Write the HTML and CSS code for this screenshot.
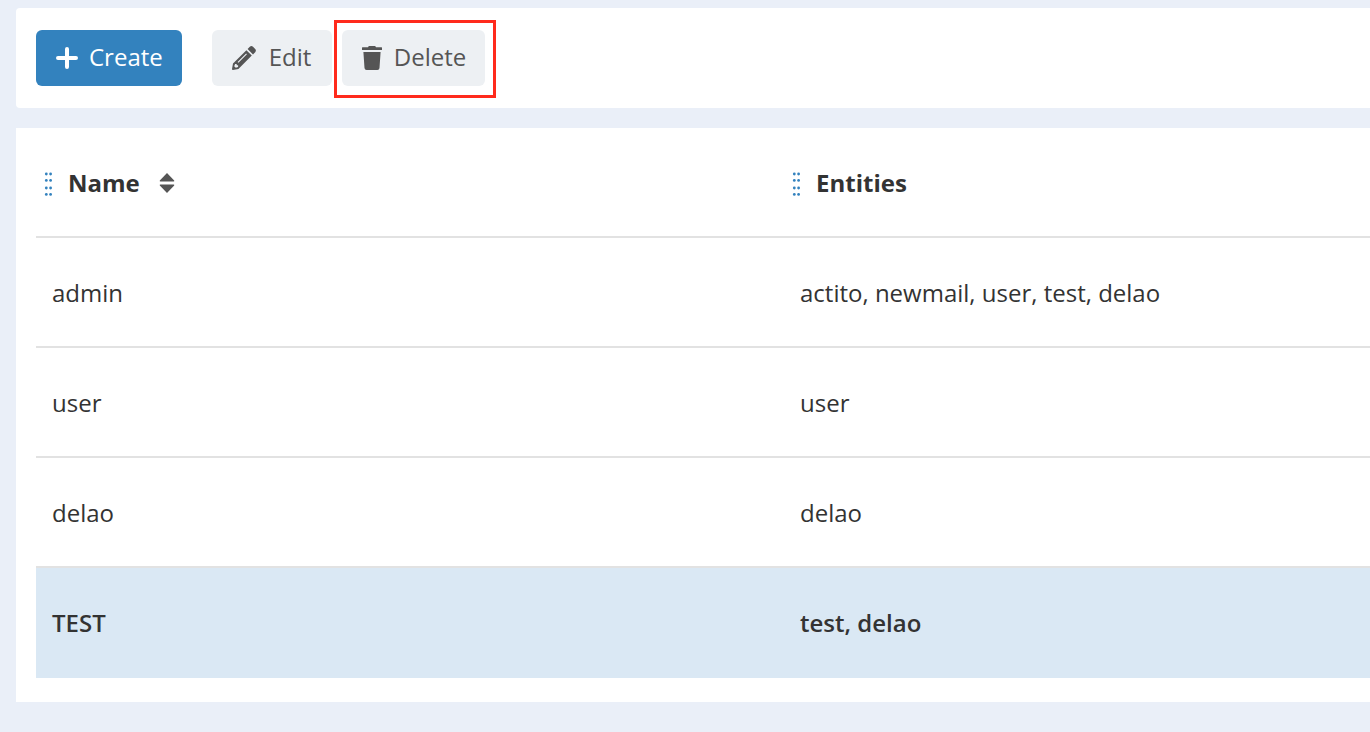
FILE: index.html
```html
<!DOCTYPE html>
<html lang="en">
<head>
<meta charset="utf-8">
<title>Profiles</title>
<link rel="stylesheet" href="styles.css">
</head>
<body>
<main class="page">
  <div class="toolbar">
    <button type="button" class="btn btn-primary">
      <svg class="icon" width="21" height="24" viewBox="0 0 21 24" overflow="visible" aria-hidden="true"><path d="M2 12H20M11 3V21" stroke="currentColor" stroke-width="4" stroke-linecap="round"/></svg>
      Create
    </button>
    <div class="group">
      <button type="button" class="btn">
        <svg class="icon" width="25" height="24" viewBox="0 0 25 24" aria-hidden="true"><path fill="currentColor" fill-rule="evenodd" d="M14.4 4.2 19.8 9.6 6.4 23 .9 24Q0 24 0 23.1L1 17.6ZM14.1 7.4 5.6 15.9 6.4 16.7 14.9 8.2ZM3.1 17.9 2.2 20.2 3.8 21.8 6.1 20.9V19.3H4.7V17.9ZM15.6 3 17.8.8Q19.4-.6 21 .8L23.2 3Q24.6 4.6 23.2 6.2L21 8.4Z"/></svg>
        Edit
      </button>
      <div class="marked">
        <button type="button" class="btn">
          <svg class="icon" width="20" height="24" viewBox="0 0 20 24" aria-hidden="true"><path fill="currentColor" d="M.5 1.3H6L6.8 0H13.2L14 1.3H19.5Q20 1.3 20 1.8V4H0V1.8Q0 1.3.5 1.3ZM1.4 6H18.6L17.5 22Q17.3 24 15.4 24H4.6Q2.7 24 2.5 22Z"/></svg>
          Delete
        </button>
      </div>
    </div>
  </div>

  <div class="panel">
    <table class="grid">
      <colgroup><col class="col-name"><col></colgroup>
      <thead>
        <tr>
          <th scope="col">
            <div class="head">
              <svg class="grip" width="8" height="26" viewBox="0 -2 8 26" aria-hidden="true"><g fill="currentColor"><circle cx="2.3" cy="2" r="1.4"/><circle cx="6.6" cy="2" r="1.4"/><circle cx="2.3" cy="8.4" r="1.4"/><circle cx="6.6" cy="8.4" r="1.4"/><circle cx="2.3" cy="16" r="1.4"/><circle cx="6.6" cy="16" r="1.4"/><circle cx="2.3" cy="22.4" r="1.4"/><circle cx="6.6" cy="22.4" r="1.4"/></g></svg>
              Name
              <button type="button" class="sort" aria-label="Sort by name"><svg class="icon-sort" width="16" height="20" viewBox="0 0 16 20" aria-hidden="true"><path fill="currentColor" d="M8 0 15.2 7.4Q15.6 8.4 14.6 8.4H1.4Q.4 8.4.8 7.4ZM8 20 .8 12.6Q.4 11.6 1.4 11.6H14.6Q15.6 11.6 15.2 12.6Z"/></svg></button>
            </div>
          </th>
          <th scope="col">
            <div class="head">
              <svg class="grip" width="8" height="26" viewBox="0 -2 8 26" aria-hidden="true"><g fill="currentColor"><circle cx="2.3" cy="2" r="1.4"/><circle cx="6.6" cy="2" r="1.4"/><circle cx="2.3" cy="8.4" r="1.4"/><circle cx="6.6" cy="8.4" r="1.4"/><circle cx="2.3" cy="16" r="1.4"/><circle cx="6.6" cy="16" r="1.4"/><circle cx="2.3" cy="22.4" r="1.4"/><circle cx="6.6" cy="22.4" r="1.4"/></g></svg>
              Entities
            </div>
          </th>
        </tr>
      </thead>
      <tbody>
        <tr><td>admin</td><td>actito, newmail, user, test, delao</td></tr>
        <tr><td>user</td><td>user</td></tr>
        <tr><td>delao</td><td>delao</td></tr>
        <tr class="selected"><td>TEST</td><td>test, delao</td></tr>
      </tbody>
    </table>
  </div>
</main>
</body>
</html>
```

FILE: styles.css
```css
* {
  box-sizing: border-box;
}

body {
  margin: 0;
  background: #eaeff8;
  color: #333;
  font: 24px/32px "Open Sans", "Noto Sans", sans-serif;
}

.page {
  display: flex;
  flex-direction: column;
  gap: 20px;
  padding: 8px 0 30px 16px;
}

.toolbar {
  display: flex;
  align-items: center;
  gap: 30px;
  padding: 22px 20px;
  background: #fff;
  border-radius: 4px 0 0 4px;
}

.group {
  display: flex;
  align-items: center;
  gap: 10px;
}

.marked {
  position: relative;
}

/* Callout frame drawn over the toolbar */
.marked::after {
  content: "";
  position: absolute;
  inset: -10px -11px -12px -8px;
  border: 3px solid #ff2a1c;
  pointer-events: none;
}

.btn {
  display: flex;
  align-items: center;
  gap: 12px;
  min-width: 120px;
  height: 56px;
  padding: 0 19px 2px 20px;
  border: 0;
  border-radius: 6px;
  background: #edf0f3;
  color: #555;
  font: inherit;
  cursor: pointer;
}

.btn-primary {
  background: #3382be;
  color: #fff;
}

.icon {
  display: block;
  flex: none;
  margin-top: 2px;
}

.icon-sort {
  display: block;
}

.panel {
  padding: 0 0 24px 20px;
  background: #fff;
}

.grid {
  width: 100%;
  table-layout: fixed;
  border-collapse: separate;
  border-spacing: 0;
  text-align: left;
}

.col-name {
  width: 748px;
}

.grid th,
.grid td {
  height: 110px;
  padding: 2px 16px 0;
  border-bottom: 2px solid #e2e2e2;
}

.grid th {
  padding-left: 8px;
  font-weight: 700;
}

.head {
  display: flex;
  align-items: center;
  gap: 16px;
}

.grip {
  color: #3382be;
}

.sort {
  margin-left: 3px;
  padding: 0;
  border: 0;
  background: none;
  color: #555;
  cursor: pointer;
}

.grid .selected td {
  border-color: #dae8f4;
  background: #dae8f4;
  font-weight: 600;
}
```
